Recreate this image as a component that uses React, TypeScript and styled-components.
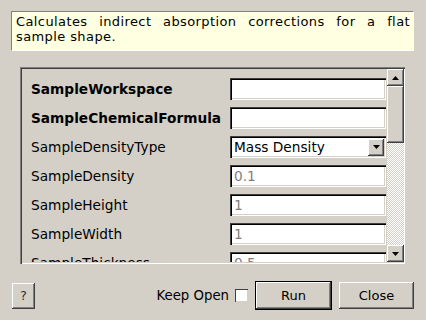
import React from "react";
import styled, { createGlobalStyle, css } from "styled-components";

const GlobalStyle = createGlobalStyle`
    html, body {
        margin: 0;
        padding: 0;
        background: #d4d0c8;
    }
    body {
        font-family: "DejaVu Sans", "Noto Sans", sans-serif;
        font-size: 13px;
        color: #000;
    }
`;

const raised = css`
    background: #d4d0c8;
    box-shadow: inset -1px -1px #404040, inset 1px 1px #ffffff, inset -2px -2px #808080,
        inset 2px 2px #d4d0c8;
`;

const sunken = css`
    background: #ffffff;
    box-shadow: inset 1px 1px #404040, inset 2px 2px #000000, inset -1px -1px #ffffff,
        inset -2px -2px #d4d0c8;
`;

interface Property {
    name: string;
    required?: boolean;
    value?: string;
    kind?: "text" | "combo";
}

const properties: Property[] = [
    { name: "SampleWorkspace", required: true },
    { name: "SampleChemicalFormula", required: true },
    { name: "SampleDensityType", kind: "combo", value: "Mass Density" },
    { name: "SampleDensity", value: "0.1" },
    { name: "SampleHeight", value: "1" },
    { name: "SampleWidth", value: "1" },
    { name: "SampleThickness", value: "0.5" },
];

const Arrow: React.FC<{ up?: boolean }> = ({ up }) => (
    <svg width="7" height="4" viewBox="0 0 7 4">
        <path d={up ? "M3.5 0 L7 4 L0 4 Z" : "M0 0 L7 0 L3.5 4 Z"} fill="#000" />
    </svg>
);

export default function App() {
    return (
        <Dialog>
            <GlobalStyle />
            <Description>
                Calculates indirect absorption corrections for a flat sample shape.
            </Description>
            <Frame>
                <Viewport>
                    {properties.map(p => (
                        <Row key={p.name}>
                            <Label $bold={p.required}>{p.name}</Label>
                            {p.kind === "combo" ? (
                                <Combo>
                                    <ComboText>{p.value}</ComboText>
                                    <ComboButton>
                                        <Arrow />
                                    </ComboButton>
                                </Combo>
                            ) : (
                                <Field>{p.value}</Field>
                            )}
                        </Row>
                    ))}
                </Viewport>
                <ScrollBar>
                    <ScrollButton>
                        <Arrow up />
                    </ScrollButton>
                    <Thumb />
                    <Trough />
                    <ScrollButton>
                        <Arrow />
                    </ScrollButton>
                </ScrollBar>
            </Frame>
            <Footer>
                <HelpButton>?</HelpButton>
                <Spacer />
                <KeepOpen>
                    Keep Open
                    <CheckBox />
                </KeepOpen>
                <RunButton>Run</RunButton>
                <CloseButton>Close</CloseButton>
            </Footer>
        </Dialog>
    );
}

const Dialog = styled.div`
    width: 426px;
    height: 320px;
    box-sizing: border-box;
    padding: 11px 12px 0 11px;
    display: flex;
    flex-direction: column;
    overflow: hidden;
`;

const Description = styled.div`
    height: 40px;
    box-sizing: border-box;
    padding: 2px 3px 0 4px;
    background: #ffffe1;
    border-top: 1px solid #808080;
    border-left: 1px solid #808080;
    border-right: 1px solid #ffffff;
    border-bottom: 1px solid #ffffff;
    font-size: 13px;
    letter-spacing: 0.4px;
    line-height: 15px;
    text-align: justify;
`;

const Frame = styled.div`
    margin: 16px 9px 0 9px;
    height: 197px;
    box-sizing: border-box;
    display: flex;
    padding: 2px 1px 2px 2px;
    box-shadow: inset 1px 1px #808080, inset 2px 2px #404040, inset -1px -1px #ffffff;
`;

const Viewport = styled.div`
    flex: 1;
    overflow: hidden;
    padding: 9px 1px 0 9px;
    display: flex;
    flex-direction: column;
    gap: 7px;
    font-size: 13.7px;
`;

const Row = styled.div`
    display: flex;
    align-items: center;
    justify-content: space-between;
    height: 22px;
    flex-shrink: 0;
`;

const Label = styled.span<{ $bold?: boolean }>`
    font-weight: ${p => (p.$bold ? "bold" : "normal")};
    white-space: nowrap;
`;

const Field = styled.div`
    ${sunken};
    width: 156px;
    height: 22px;
    box-sizing: border-box;
    padding: 3px 4px 0 4px;
    color: #808080;
    line-height: 16px;
`;

const Combo = styled.div`
    ${sunken};
    width: 156px;
    height: 22px;
    box-sizing: border-box;
    padding: 2px 2px 2px 4px;
    display: flex;
    align-items: center;
`;

const ComboText = styled.span`
    flex: 1;
`;

const ComboButton = styled.div`
    ${raised};
    width: 16px;
    height: 17px;
    display: flex;
    align-items: center;
    justify-content: center;
`;

const ScrollBar = styled.div`
    width: 17px;
    display: flex;
    flex-direction: column;
`;

const ScrollButton = styled.div`
    ${raised};
    height: 17px;
    display: flex;
    align-items: center;
    justify-content: center;
`;

const Thumb = styled.div`
    ${raised};
    height: 57px;
`;

const Trough = styled.div`
    flex: 1;
    background-color: #ffffff;
    background-image: repeating-conic-gradient(#d4d0c8 0 25%, #ffffff 0 50%);
    background-size: 2px 2px;
`;

const Footer = styled.div`
    margin-top: 17px;
    display: flex;
    align-items: center;
    height: 29px;
`;

const Spacer = styled.div`
    flex: 1;
`;

const buttonBase = css`
    ${raised};
    box-sizing: border-box;
    display: flex;
    align-items: center;
    justify-content: center;
    font-family: "DejaVu Sans", sans-serif;
    font-size: 13px;
`;

const HelpButton = styled.div`
    ${buttonBase};
    width: 23px;
    height: 26px;
    margin-left: 1px;
    color: #303030;
`;

const KeepOpen = styled.label`
    display: flex;
    align-items: center;
    gap: 6px;
    margin-right: 7px;
    font-size: 13.3px;
`;

const CheckBox = styled.span`
    ${sunken};
    width: 13px;
    height: 13px;
    box-shadow: inset 1px 1px #404040, inset -1px -1px #d4d0c8;
`;

const RunButton = styled.div`
    ${buttonBase};
    width: 77px;
    height: 29px;
    border: 1px solid #000;
    margin-right: 7px;
`;

const CloseButton = styled.div`
    ${buttonBase};
    width: 75px;
    height: 27px;
`;
